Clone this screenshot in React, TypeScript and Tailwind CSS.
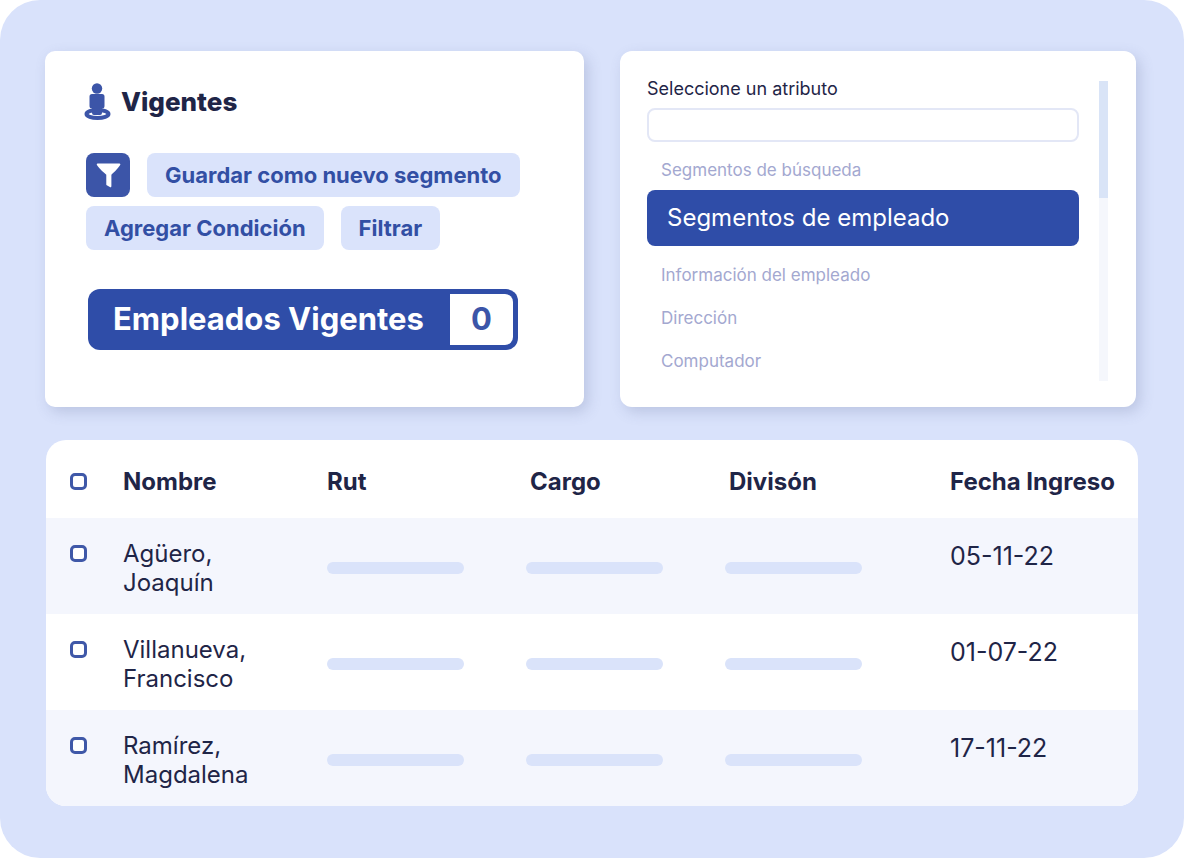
import React, { useState } from 'react';

const ATTRIBUTES = [
  'Segmentos de búsqueda',
  'Segmentos de empleado',
  'Información del empleado',
  'Dirección',
  'Computador',
];

const EMPLOYEES = [
  { lastName: 'Agüero', firstName: 'Joaquín', date: '05-11-22' },
  { lastName: 'Villanueva', firstName: 'Francisco', date: '01-07-22' },
  { lastName: 'Ramírez', firstName: 'Magdalena', date: '17-11-22' },
];

function PersonIcon() {
  return (
    <svg viewBox="0 0 27 38" className="h-[38px] w-[27px] shrink-0" aria-hidden="true">
      <ellipse cx="13.5" cy="31" rx="11" ry="4" fill="none" stroke="#3c55a8" strokeWidth="4" />
      <circle cx="13" cy="5.500" r="5.2" fill="#3c55a8" />
      <path
        d="M8 11h10a2.500 2.500 0 0 1 2.500 2.500v9.500a2.500 2.500 0 0 1-2.500 2.500v4.500a2 2 0 0 1-2 2h-6a2 2 0 0 1-2-2v-4.500A2.500 2.500 0 0 1 5.500 23v-9.500a2.500 2.500 0 0 1 2.500-2.500Z"
        fill="#3c55a8"
      />
    </svg>
  );
}

function FunnelIcon() {
  return (
    <svg viewBox="0 0 26 26" className="size-[25px]" aria-hidden="true">
      <path
        d="M1.600 0.500h22.800a0.900 0.900 0 0 1 0.800 1.400C24 4.500 20 8.500 16 12.300V24.200a1 1 0 0 1-1.600 0.800L11.200 23.200a1 1 0 0 1-0.500-0.900V12.300C6.500 8.500 2 4.500 0.900 1.900a0.900 0.900 0 0 1 0.700-1.400Z"
        fill="#fff"
      />
    </svg>
  );
}

function ActionButton({ children }: { children: React.ReactNode }) {
  return (
    <button
      type="button"
      className="h-11 rounded-lg bg-[#dae3fb] px-[18px] text-[22px] font-bold text-[#324fa4]"
    >
      {children}
    </button>
  );
}

function Checkbox({ label }: { label: string }) {
  return (
    <input
      type="checkbox"
      aria-label={label}
      className="block size-[17px] appearance-none rounded-[5px] border-3 border-[#3f58a8] bg-white checked:bg-[#3f58a8]"
    />
  );
}

function SegmentCard() {
  return (
    <section className="rounded-[10px] bg-white px-[41px] pt-8 pb-14 shadow-[4px_5px_14px_rgba(90,105,150,0.24)]">
      <div className="-ml-0.5 flex items-center gap-2.5">
        <PersonIcon />
        <h2 className="text-[26px] leading-9 font-extrabold">Vigentes</h2>
      </div>

      <div className="mt-8 flex flex-wrap gap-x-[17px] gap-y-[9px]">
        <button
          type="button"
          aria-label="Filtro"
          className="flex size-11 items-center justify-center rounded-lg bg-[#3c55a8]"
        >
          <FunnelIcon />
        </button>
        <ActionButton>Guardar como nuevo segmento</ActionButton>
        <ActionButton>Agregar Condición</ActionButton>
        <ActionButton>Filtrar</ActionButton>
      </div>

      <div className="mx-0.5 mt-[39px] inline-flex h-[61px] rounded-xl bg-[#2f4da8] p-[5px] text-[31px] font-bold">
        <span className="flex items-center pr-[26px] pl-5 text-white">Empleados Vigentes</span>
        <span className="flex w-[63px] items-center justify-center rounded-r-lg bg-white text-[#3c55a8]">0</span>
      </div>
    </section>
  );
}

function AttributeCard() {
  const [selected, setSelected] = useState(1);

  return (
    <section className="flex gap-5 rounded-xl bg-white py-[26px] pr-7 pl-[27px] shadow-[4px_5px_14px_rgba(90,105,150,0.24)]">
      <div className="flex-1">
        <label htmlFor="attribute" className="block text-[18px] leading-6">
          Seleccione un atributo
        </label>
        <input
          id="attribute"
          type="text"
          className="mt-[7px] block h-[34px] w-full rounded-lg border-2 border-[#e3e7f6] px-3 text-base outline-none"
        />
        <ul role="listbox" aria-label="Atributos" className="mt-[5px]">
          {ATTRIBUTES.map((name, i) => (
            <li key={name} role="option" aria-selected={i === selected}>
              <button
                type="button"
                onClick={() => setSelected(i)}
                className={
                  i === selected
                    ? 'mb-1.5 block h-14 w-full rounded-lg bg-[#2f4da8] px-5 text-left text-[24px] text-white'
                    : 'block h-[43px] w-full px-3.5 pt-1 text-left text-[17px] text-[#a3a8d0]'
                }
              >
                {name}
              </button>
            </li>
          ))}
        </ul>
      </div>

      {/* scroll track */}
      <div className="mt-1 w-[9px] bg-[#f5f7fc]">
        <div className="h-[39%] bg-[#d9e4f7]" />
      </div>
    </section>
  );
}

function Placeholder() {
  return <div className="h-3 w-[137px] rounded-md bg-[#dae3fa]" />;
}

function EmployeeTable() {
  return (
    <div className="mt-[33px] -mr-0.5 ml-px overflow-hidden rounded-[20px] bg-white">
      <table className="w-full table-fixed text-left text-[24px] leading-[29px]">
        <colgroup>
          <col className="w-[77px]" />
          <col className="w-[204px]" />
          <col className="w-[199px]" />
          <col className="w-[199px]" />
          <col className="w-[225px]" />
          <col />
        </colgroup>
        <thead>
          <tr className="h-[78px]">
            <th className="pt-1 pl-6">
              <Checkbox label="Seleccionar todos" />
            </th>
            <th className="pt-1">Nombre</th>
            <th className="pt-1">Rut</th>
            <th className="pt-1 pl-1">Cargo</th>
            <th className="pt-1 pl-1">Divisón</th>
            <th className="pt-1 whitespace-nowrap">Fecha Ingreso</th>
          </tr>
        </thead>
        <tbody>
          {EMPLOYEES.map((employee) => (
            <tr key={employee.firstName} className="h-24 odd:bg-[#f4f6fd]">
              <td className="pt-[27px] pl-6 align-top">
                <Checkbox label={`Seleccionar ${employee.firstName}`} />
              </td>
              <td className="pt-[21px] align-top">
                {employee.lastName},
                <br />
                {employee.firstName}
              </td>
              <td className="pt-1">
                <Placeholder />
              </td>
              <td className="pt-1">
                <Placeholder />
              </td>
              <td className="pt-1">
                <Placeholder />
              </td>
              <td className="pt-6 align-top text-[25px]">{employee.date}</td>
            </tr>
          ))}
        </tbody>
      </table>
    </div>
  );
}

export default function App() {
  return (
    <main className="min-h-screen rounded-[40px] bg-[#d9e2fb] pt-[51px] pr-12 pb-[51px] pl-[45px] font-['Inter',sans-serif] text-[#1f2547]">
      <div className="grid grid-cols-[539fr_516fr] gap-9">
        <SegmentCard />
        <AttributeCard />
      </div>
      <EmployeeTable />
    </main>
  );
}
